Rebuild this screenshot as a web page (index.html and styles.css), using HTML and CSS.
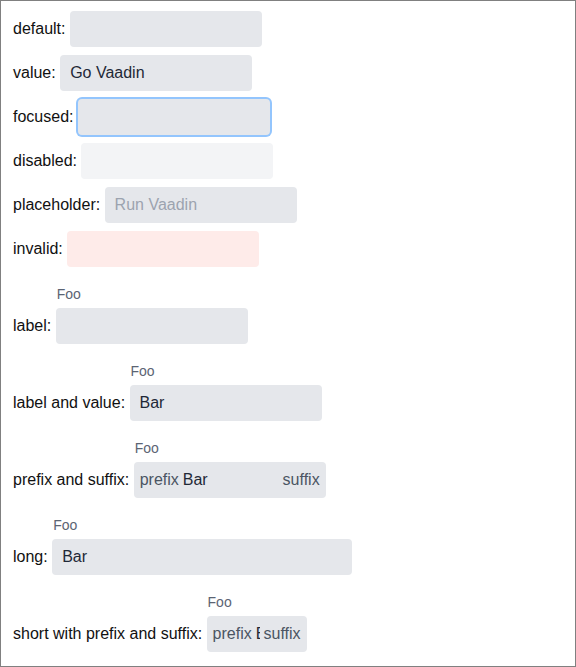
FILE: index.html
```html
<!DOCTYPE html>
<html lang="en">
<head>
<meta charset="utf-8">
<title>Text fields</title>
<link rel="stylesheet" href="styles.css">
</head>
<body>
<div class="page">
  <div class="row">
    <span class="caption">default:</span>
    <div class="field"><div class="box"><input class="input" type="text"></div></div>
  </div>
  <div class="row">
    <span class="caption">value:</span>
    <div class="field"><div class="box"><input class="input" type="text" value="Go Vaadin"></div></div>
  </div>
  <div class="row">
    <span class="caption">focused:</span>
    <div class="field"><div class="box is-focused"><input class="input" type="text"></div></div>
  </div>
  <div class="row">
    <span class="caption">disabled:</span>
    <div class="field"><div class="box is-disabled"><input class="input" type="text" disabled></div></div>
  </div>
  <div class="row">
    <span class="caption">placeholder:</span>
    <div class="field"><div class="box"><input class="input" type="text" placeholder="Run Vaadin"></div></div>
  </div>
  <div class="row">
    <span class="caption">invalid:</span>
    <div class="field"><div class="box is-invalid"><input class="input" type="text"></div></div>
  </div>
  <div class="row">
    <span class="caption">label:</span>
    <div class="field"><span class="field-label">Foo</span><div class="box"><input class="input" type="text"></div></div>
  </div>
  <div class="row">
    <span class="caption">label and value:</span>
    <div class="field"><span class="field-label">Foo</span><div class="box"><input class="input" type="text" value="Bar"></div></div>
  </div>
  <div class="row">
    <span class="caption">prefix and suffix:</span>
    <div class="field"><span class="field-label">Foo</span><div class="box"><span class="affix">prefix</span><input class="input" type="text" value="Bar"><span class="affix">suffix</span></div></div>
  </div>
  <div class="row">
    <span class="caption">long:</span>
    <div class="field field-long"><span class="field-label">Foo</span><div class="box"><input class="input" type="text" value="Bar"></div></div>
  </div>
  <div class="row">
    <span class="caption">short with prefix and suffix:</span>
    <div class="field field-short"><span class="field-label">Foo</span><div class="box"><span class="affix">prefix</span><input class="input" type="text" value="Bar"><span class="affix">suffix</span></div></div>
  </div>
</div>
</body>
</html>
```
FILE: styles.css
```css
* { box-sizing: border-box; }
html, body { margin: 0; padding: 0; }
body {
  font-family: "Liberation Sans", Arial, sans-serif;
  font-size: 16px;
  color: #111;
  background: #fff;
}
.page {
  width: 576px;
  height: 667px;
  border: 1px solid #808080;
  padding: 10px 12px;
  display: flex;
  flex-direction: column;
  gap: 8px;
  overflow: hidden;
}
.row {
  display: flex;
  align-items: flex-end;
  gap: 4.45px;
}
.caption {
  height: 36px;
  line-height: 36px;
  white-space: nowrap;
}
.field {
  width: 192px;
  display: flex;
  flex-direction: column;
}
.field-long { width: 300px; }
.field-short { width: 100px; }
.field-label {
  font-size: 14px;
  line-height: 20px;
  padding: 9px 0 4px 1px;
  color: #5b6473;
}
.box {
  height: 36px;
  border-radius: 4px;
  background: #e5e7eb;
  display: flex;
  align-items: center;
  padding: 0 6px;
}
.box.is-focused { box-shadow: 0 0 0 2px #93c5fd; }
.box.is-disabled { background: #f3f4f6; }
.box.is-invalid { background: #feebe9; }
.input {
  flex: 1;
  min-width: 0;
  width: 0;
  height: 36px;
  border: 0;
  outline: 0;
  background: transparent;
  padding: 0 4px;
  margin: 0;
  font-family: inherit;
  font-size: 16px;
  color: #1f2937;
}
.input::placeholder { color: #9ca3af; opacity: 1; }
.affix {
  color: #4b5563;
  white-space: nowrap;
  line-height: 36px;
}
```
